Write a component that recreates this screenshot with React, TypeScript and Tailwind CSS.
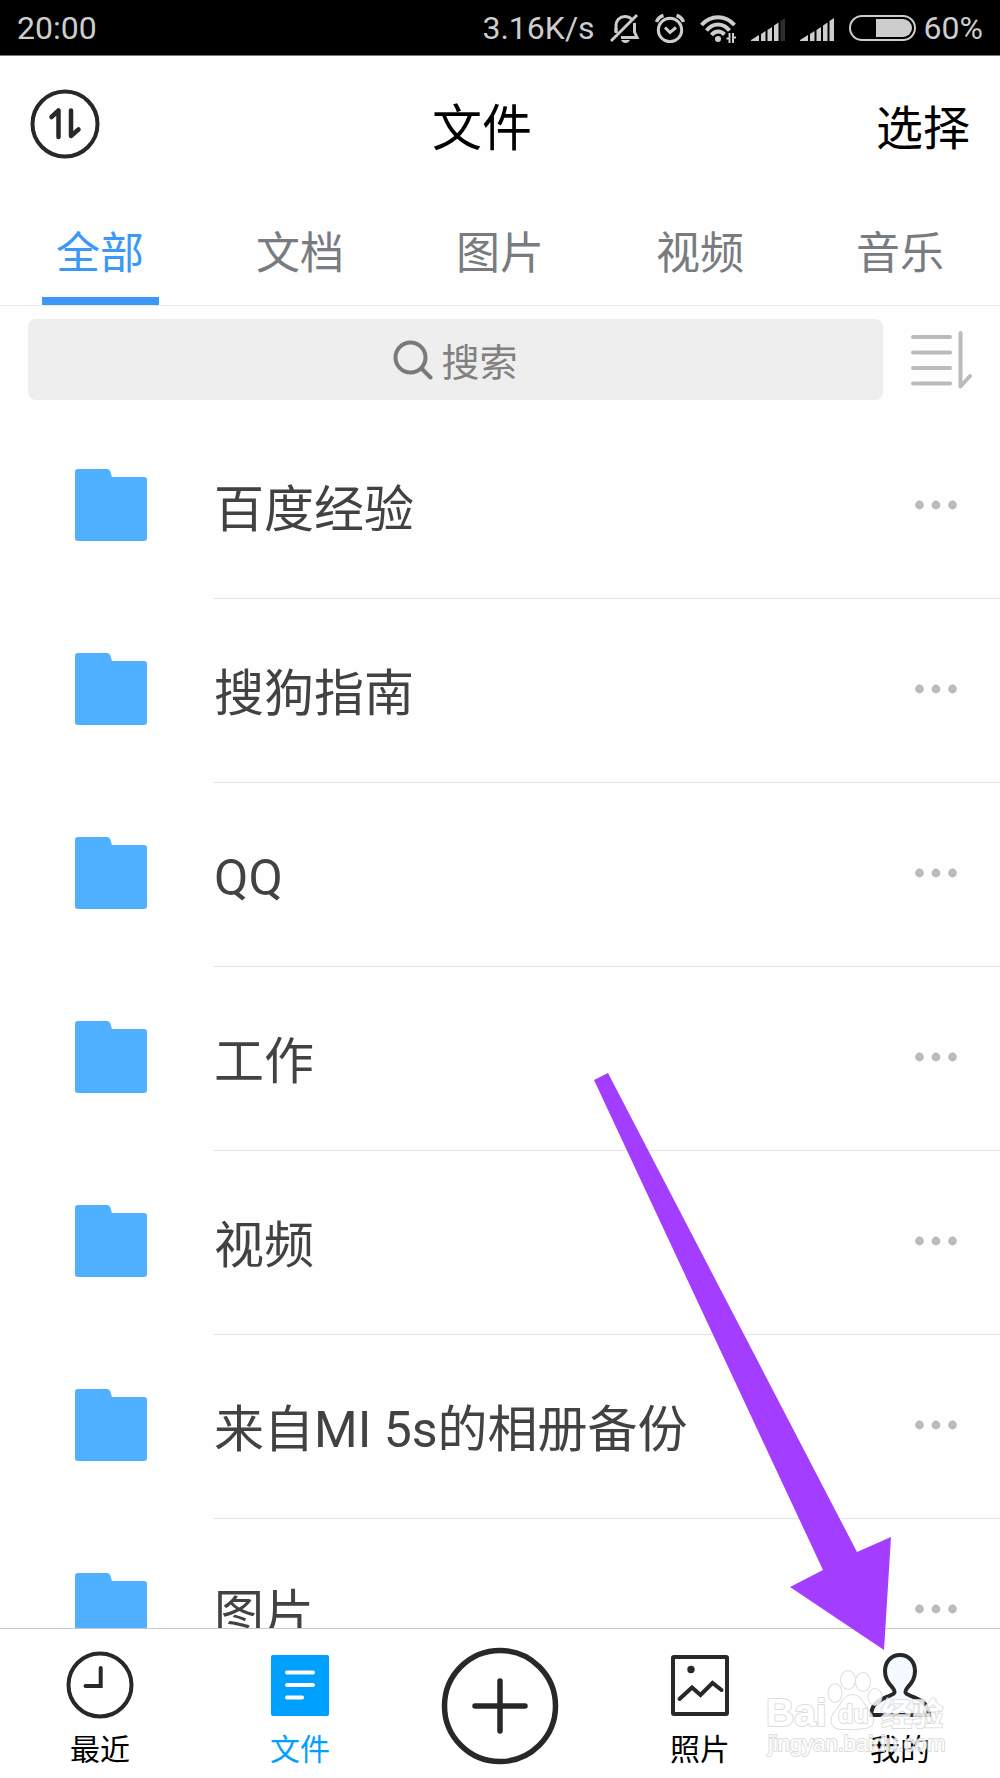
import { useState, type ReactNode } from "react";
import clsx from "clsx";

const TABS = ["全部", "文档", "图片", "视频", "音乐"];

const FOLDERS = ["百度经验", "搜狗指南", "QQ", "工作", "视频", "来自MI 5s的相册备份", "图片"];

function Signal({ weak = false }: { weak?: boolean }) {
  return (
    <svg width="34" height="28" viewBox="0 0 34 28" fill="#cdcdcd" aria-hidden="true">
      <path d="M0 27v-1l8-5v6z" />
      <path d="M10 27v-7l4.500-3v10z" />
      <path d="M16.500 27V16l4.500-3v14z" />
      <path d="M23 27V11.500l4.500-3V27z" />
      <path d="M29.500 27V7L34 4v23z" fill={weak ? "#2e2e2e" : "#cdcdcd"} />
    </svg>
  );
}

function StatusBar() {
  return (
    <div className="flex h-14 shrink-0 items-center justify-between border-b border-[#777] bg-black px-[17px] text-[32px] text-[#cdcdcd]">
      <span>20:00</span>
      <div className="flex items-center gap-[15px]">
        <span>3.16K/s</span>
        <svg width="30" height="30" viewBox="0 0 30 30" fill="none" stroke="#cdcdcd" strokeWidth="3" aria-hidden="true">
          <path d="M6 19v-6c0-6 4-9.500 9-9.500 2.500 0 5 1 6.500 2.500M24.500 10v9l2.500 5.500H11" />
          <path d="M6 15v5M1 28L27 2" />
          <path d="M11 27h9c-1 2-2.500 3-4.500 3s-3.500-1-4.500-3z" fill="#cdcdcd" stroke="none" />
        </svg>
        <svg width="30" height="30" viewBox="0 0 30 30" fill="none" stroke="#cdcdcd" strokeWidth="3" aria-hidden="true">
          <circle cx="15" cy="17" r="11.700" />
          <path d="M10 14.500l5 5 6-5" />
          <path d="M1.500 9c1-3 3.500-5.500 7-6.500M28.500 9c-1-3-3.500-5.500-7-6.500" strokeWidth="3.500" />
        </svg>
        <svg width="36" height="30" viewBox="0 0 36 30" fill="none" stroke="#cdcdcd" strokeWidth="4" aria-hidden="true">
          <path d="M1.500 12C10.500 1.500 25.500 1.500 34.500 12" />
          <path d="M6.500 17.500c6.500-8 16.500-8 23 0" />
          <path d="M11.500 22c4-4.500 9-4.500 13-0.500" />
          <circle cx="18" cy="26" r="3" fill="#cdcdcd" stroke="none" />
          <path d="M29.500 20v10M33 20v10M26.500 25.500h3M33 24.500h3" strokeWidth="2" />
        </svg>
        <Signal weak />
        <Signal />
        <div className="flex items-center gap-2">
          <svg width="67" height="26" viewBox="0 0 67 26" aria-hidden="true">
            <rect x="1" y="1" width="65" height="24" rx="12" fill="none" stroke="#cdcdcd" strokeWidth="2" />
            <path d="M27 4h27a9 9 0 0 1 0 18H27z" fill="#cdcdcd" />
          </svg>
          <span>60%</span>
        </div>
      </div>
    </div>
  );
}

function Header() {
  return (
    <header className="flex h-[136px] shrink-0 items-center justify-between px-[30px] text-black">
      <button type="button" aria-label="传输列表">
        <svg width="70" height="70" viewBox="0 0 70 70" fill="none" stroke="#282828" strokeWidth="4" aria-hidden="true">
          <circle cx="35" cy="35" r="32.500" />
          <path d="M21.500 28l7-6.500V48M41 21.500V47l7.500-6.500" strokeWidth="4.500" strokeLinecap="round" strokeLinejoin="round" />
        </svg>
      </button>
      <h1 className="pt-[10px] text-[50px] leading-[60px]">文件</h1>
      <button type="button" className="pt-[10px] pl-3 text-[47px] leading-[60px]">
        选择
      </button>
    </header>
  );
}

function SearchBar() {
  return (
    <div className="flex shrink-0 items-center gap-7 px-7 pt-[13px]">
      <label className="flex h-[81px] flex-1 items-center justify-center gap-2 rounded-lg bg-[#eee]">
        <svg width="40" height="40" viewBox="0 0 40 40" fill="none" stroke="#7a7a7a" strokeWidth="4" strokeLinecap="round" aria-hidden="true">
          <circle cx="17.500" cy="17.500" r="15" />
          <path d="M28.500 28.500l9 9" />
        </svg>
        <input
          type="search"
          aria-label="搜索"
          placeholder="搜索"
          className="field-sizing-content text-[38px] leading-[50px] outline-none placeholder:text-[#808080]"
        />
      </label>
      <button type="button" aria-label="排序">
        <svg width="61" height="58" viewBox="0 0 61 58" fill="none" stroke="#bbb" strokeWidth="4" strokeLinecap="round" strokeLinejoin="round" aria-hidden="true">
          <path d="M2 6h37M2 21.500h37M2 37h37M2 52.500h37M49.500 2V55.500L59 45" />
        </svg>
      </button>
    </div>
  );
}

function FolderRow({ name }: { name: string }) {
  return (
    <li className="flex h-[184px]">
      <div className="flex w-[214px] shrink-0 items-center pb-[5px] pl-[75px]">
        <svg width="72" height="72" viewBox="0 0 72 72" fill="#4fb0ff" aria-hidden="true">
          <path d="M3 0h29c2 0 3 1.500 3.500 3L37 8h32c2 0 3 1 3 3v58c0 2-1 3-3 3H3c-2 0-3-1-3-3V3c0-2 1-3 3-3z" />
        </svg>
      </div>
      <div className="flex flex-1 items-center justify-between border-b border-[#e4e4e4] pr-[43px] pb-[3px]">
        <span className="pt-[10px] text-[50px] leading-[60px] text-[#424242]">{name}</span>
        <button type="button" aria-label={`${name} 更多`}>
          <svg width="42" height="10" viewBox="0 0 42 10" fill="#bbb" aria-hidden="true">
            <circle cx="4.500" cy="5" r="4.400" />
            <circle cx="21" cy="5" r="4.400" />
            <circle cx="37.500" cy="5" r="4.400" />
          </svg>
        </button>
      </div>
    </li>
  );
}

function NavItem({ label, active = false, children }: { label: string; active?: boolean; children: ReactNode }) {
  return (
    <button
      type="button"
      className={clsx("flex flex-col items-center pt-[22px] text-[30px]", active ? "text-[#00a0ff]" : "text-black")}
    >
      <svg width="68" height="68" viewBox="0 0 68 68" fill="none" stroke="#282828" strokeWidth="4" aria-hidden="true">
        {children}
      </svg>
      <span className="mt-[13px] leading-9">{label}</span>
    </button>
  );
}

function BottomNav() {
  return (
    <nav className="relative grid h-[150px] shrink-0 grid-cols-5 items-start border-t border-[#c8c8c8] bg-white">
      <NavItem label="最近">
        <circle cx="34" cy="34" r="31.500" />
        <path d="M34.700 17v18H19.500" strokeLinecap="round" />
      </NavItem>
      <NavItem label="文件" active>
        <rect x="5" y="4" width="58" height="61" rx="2" fill="#00a0ff" stroke="none" />
        <path d="M21 21.500h26M21 34h26M21 46.500h15" stroke="#fff" strokeLinecap="round" />
      </NavItem>
      <button type="button" aria-label="添加" className="flex justify-center pt-[18px]">
        <svg width="118" height="118" viewBox="0 0 118 118" fill="none" stroke="#282828" aria-hidden="true">
          <circle cx="59" cy="59" r="55.500" strokeWidth="5.500" />
          <path d="M59 34v50M34 59h50" strokeWidth="5.500" strokeLinecap="round" />
        </svg>
      </button>
      <NavItem label="照片">
        <rect x="7" y="6" width="54" height="57" rx="1" />
        <path d="M13.500 48L26 36.500l8.500 7.500 12-12 9 7" strokeLinecap="round" />
        <circle cx="25" cy="18.500" r="3.700" fill="#282828" stroke="none" />
      </NavItem>
      <NavItem label="我的">
        <path
          d="M34 4c-9 0-15 7-15 16 0 7 3 12 7 16 5 6 2 7-3 9C14 49 6 51 5 64h58c-1-13-9-15-18-19-5-2-8-3-3-9 4-4 7-9 7-16 0-9-6-16-15-16z"
          fill="#f4faff"
        />
      </NavItem>

      <svg className="pointer-events-none absolute right-[45px] bottom-0 h-[118px] w-[200px]" viewBox="0 0 200 118" aria-hidden="true">
        <g fill="#fff" stroke="#d8d8d8" strokeWidth="2" paintOrder="stroke" strokeLinejoin="round" opacity="0.85" fontFamily="'Liberation Sans', 'Noto Sans CJK SC', sans-serif">
          <ellipse cx="80" cy="33" rx="6.500" ry="9" />
          <ellipse cx="93" cy="20" rx="7" ry="9" />
          <ellipse cx="108" cy="22" rx="7" ry="9" />
          <ellipse cx="120" cy="37" rx="6.500" ry="8" />
          <path d="M98 35c-10 0-12 11-18 17-7 8-3 17 7 17 7 0 17 0 23-1 10-1 10-9 4-17-6-6-8-16-16-16z" />
          <text x="11" y="66" fontSize="39" fontWeight="700">Bai</text>
          <text x="83" y="63" fontSize="25" fontWeight="700">du</text>
          <text x="126" y="65" fontSize="31" fontWeight="700">经验</text>
          <text x="13" y="91" fontSize="22">jingyan.baidu.com</text>
        </g>
      </svg>
    </nav>
  );
}

export default function App() {
  const [tab, setTab] = useState(TABS[0]);

  return (
    <div className="relative flex h-screen flex-col overflow-hidden bg-[#fefefe] font-['Roboto','Noto_Sans_CJK_SC',sans-serif]">
      <StatusBar />
      <Header />

      <div className="grid h-[114px] shrink-0 grid-cols-5 border-b border-[#e6edf2]">
        {TABS.map((t) => (
          <button
            key={t}
            type="button"
            onClick={() => setTab(t)}
            className={clsx("flex flex-col items-center text-[44px]", t === tab ? "text-[#3c98f8]" : "text-[#787c80]")}
          >
            <span className="flex flex-1 items-center pt-[18px]">{t}</span>
            <span className={clsx("h-2 w-[117px]", t === tab && "bg-[#3c98f8]")} />
          </button>
        ))}
      </div>

      <SearchBar />

      <ul className="mt-[15px] min-h-0 flex-1 overflow-y-auto [scrollbar-width:none]">
        {FOLDERS.map((name) => (
          <FolderRow key={name} name={name} />
        ))}
      </ul>

      <BottomNav />

      {/* pointer to the 我的 tab */}
      <svg
        className="pointer-events-none absolute right-[109px] bottom-[128px] h-[577px] w-[297px]"
        viewBox="0 0 297 577"
        fill="#a33dff"
        aria-hidden="true"
      >
        <path d="M0 7L14 0l249 479 34-15-7 113-94-63 33-17z" />
      </svg>
    </div>
  );
}
